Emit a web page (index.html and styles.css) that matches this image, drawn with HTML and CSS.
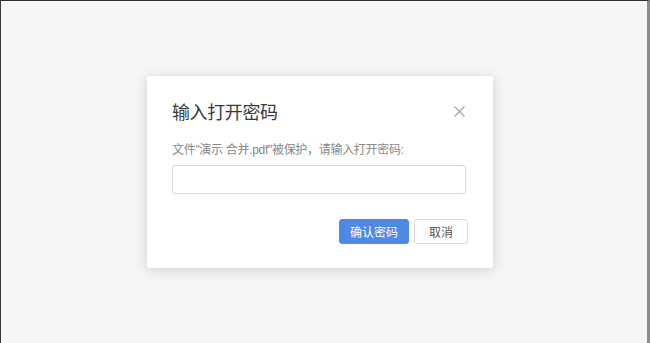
FILE: index.html
```html
<!DOCTYPE html>
<html lang="zh-CN">
<head>
    <meta charset="UTF-8">
    <meta name="viewport" content="width=device-width, initial-scale=1.0">
    <title>输入打开密码</title>
    <link rel="stylesheet" href="styles.css">
</head>
<body>
    <div class="viewer">
        <!-- Password dialog -->
        <div class="dialog">
            <div class="dialog-header">
                <h2 class="dialog-title">输入打开密码</h2>
                <button class="close-btn" aria-label="关闭">
                    <svg width="11" height="11" viewBox="0 0 11 11">
                        <path d="M0.5 0.5 L10.5 10.5 M10.5 0.5 L0.5 10.5" stroke="#a0a0a0" stroke-width="1.1" fill="none"/>
                    </svg>
                </button>
            </div>
            <p class="dialog-label">文件"演示 合并.pdf"被保护，请输入打开密码:</p>
            <input type="password" class="password-input">
            <div class="dialog-actions">
                <button class="btn btn-primary">确认密码</button>
                <button class="btn btn-default">取消</button>
            </div>
        </div>
    </div>
</body>
</html>
```

FILE: styles.css
```css
body {
    margin: 0;
    font-family: 'Noto Sans CJK SC', 'Noto Sans', sans-serif;
    background-color: #f5f6f8;
}

.viewer {
    box-sizing: border-box;
    height: 343px;
    border-top: 1px solid #2e2e2e;
    border-left: 1px solid #3a3a3a;
    border-right: 3px solid #8c8c8c;
    background-color: #f5f6f8;
    display: flex;
    align-items: center;
    justify-content: center;
    padding-right: 8px;
}

.dialog {
    box-sizing: border-box;
    width: 346px;
    height: 192px;
    background-color: #ffffff;
    border-radius: 3px;
    box-shadow: 0 2px 14px rgba(0, 0, 0, 0.16);
    padding: 23px 25px 24px 25px;
}

.dialog-header {
    display: flex;
    justify-content: space-between;
    align-items: center;
    height: 24px;
}

.dialog-title {
    margin: 0;
    font-size: 18px;
    line-height: 24px;
    font-weight: normal;
    color: #3a3a3a;
    letter-spacing: -0.4px;
}

.close-btn {
    background: none;
    border: none;
    padding: 0;
    margin-right: 3px;
    width: 11px;
    height: 11px;
    display: flex;
    cursor: pointer;
}

.dialog-label {
    margin: 18px 0 0 0;
    font-family: 'Liberation Sans', 'Noto Sans CJK SC', sans-serif;
    font-size: 12px;
    line-height: 19px;
    color: #888888;
    letter-spacing: -0.3px;
}

.password-input {
    display: block;
    box-sizing: border-box;
    width: 294px;
    height: 29px;
    margin-top: 5px;
    border: 1px solid #d9d9d9;
    border-radius: 3px;
    outline: none;
}

.dialog-actions {
    display: flex;
    justify-content: flex-end;
    gap: 5px;
    margin-top: 25px;
}

.btn {
    box-sizing: border-box;
    height: 25px;
    font-family: inherit;
    font-size: 12px;
    border-radius: 3px;
    padding: 0;
    cursor: pointer;
}

.btn-primary {
    width: 70px;
    background-color: #5088e5;
    border: 1px solid #5088e5;
    color: #ffffff;
}

.btn-default {
    width: 54px;
    background-color: #ffffff;
    border: 1px solid #dcdcdc;
    color: #555555;
}
```
